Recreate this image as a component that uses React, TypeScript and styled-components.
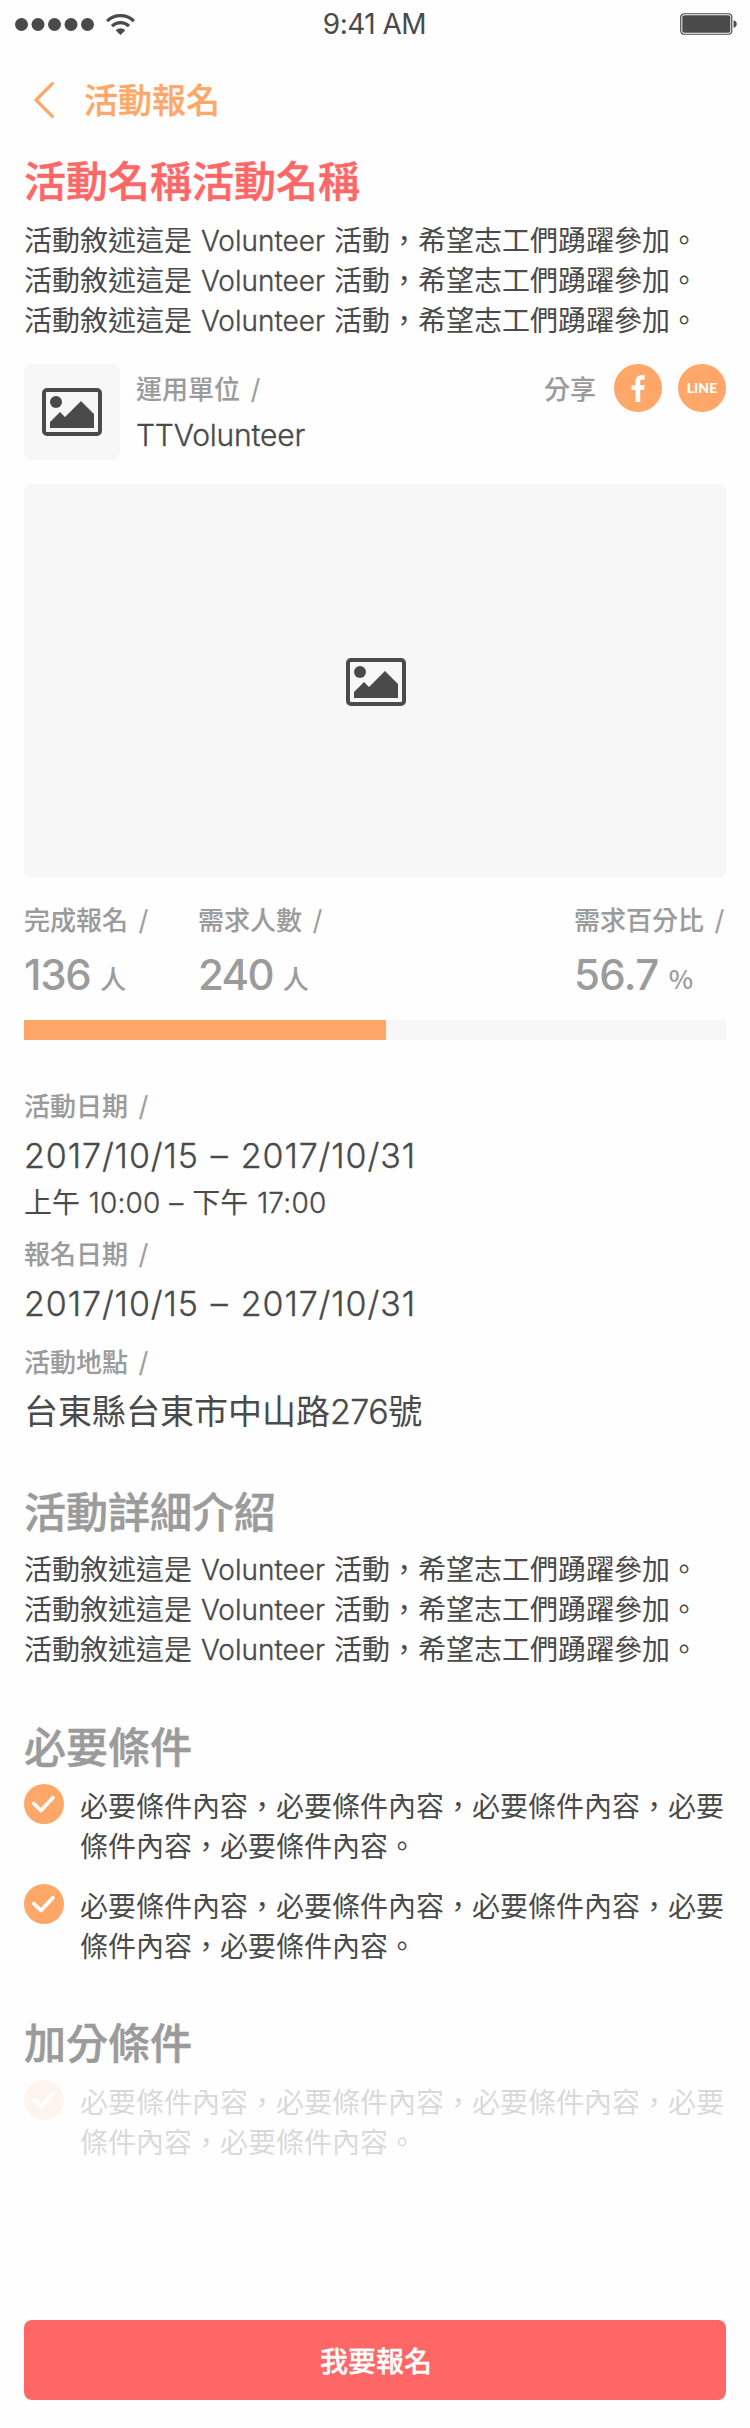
import React from 'react';
import styled, { createGlobalStyle } from 'styled-components';

const color = {
  coral: '#ff6666',
  orange: '#ffa768',
  ink: '#4a4a4a',
  grey: '#9b9b9b',
  panel: '#f7f7f7',
};

const GlobalStyle = createGlobalStyle`
  *, *::before, *::after { box-sizing: border-box; }
  body {
    margin: 0;
    background: #fefefe;
    color: ${color.ink};
    font-family: 'Noto Sans CJK TC', sans-serif;
  }
  :where(h1, h2, p, ul) { margin: 0; padding: 0; font-weight: inherit; }
  :where(svg) { display: block; flex: none; }
`;

const Screen = styled.div`
  width: 750px;
  height: 2428px;
  display: flex;
  flex-direction: column;
  padding: 0 24px 28px;
  background: #fefefe;
`;

const StatusBar = styled.header`
  height: 48px;
  margin: 0 -24px;
  padding: 0 13px 0 15px;
  display: grid;
  grid-template-columns: 1fr auto 1fr;
  align-items: center;
`;

const Signal = styled.div`
  display: flex;
  align-items: center;
  gap: 11px;
`;

const Clock = styled.time`
  padding-right: 3px;
  font: 400 28px/48px Inter, sans-serif;
  letter-spacing: -0.5px;
`;

const BatterySlot = styled.div`
  display: flex;
  justify-content: flex-end;
`;

const NavBar = styled.nav`
  height: 101px;
  padding-left: 10px;
  display: flex;
  align-items: center;
  gap: 30px;
  color: ${color.orange};
  font-size: 34px;
  font-weight: 500;
  line-height: 48px;
  -webkit-text-stroke: 0.3px currentColor;

  > svg { margin-top: 3px; }
`;

const Heading = styled.h2<{ $accent?: boolean; $top?: number }>`
  margin-top: ${(p) => p.$top ?? 0}px;
  font-size: 42px;
  font-weight: 500;
  line-height: 60px;
  color: ${(p) => (p.$accent ? color.coral : color.grey)};
  -webkit-text-stroke: 0.5px currentColor;
`;

const Copy = styled.p<{ $top?: number }>`
  margin-top: ${(p) => p.$top ?? 0}px;
  font-size: 28px;
  font-weight: 400;
  line-height: 40px;
  white-space: nowrap;
`;

const Latin = styled.span`
  display: inline-block;
  width: 142px;
  text-align: center;
  font-family: Inter, sans-serif;
  font-weight: 350;
  line-height: 28px;
  -webkit-text-stroke: 0.35px currentColor;
`;

const Num = styled.span`
  font-family: Inter, sans-serif;
  font-weight: 350;
  line-height: 0;
  letter-spacing: 0.9px;
  word-spacing: 1.5px;
  -webkit-text-stroke: 0.35px currentColor;
`;

const TimeNum = styled(Num)<{ $track?: number }>`
  letter-spacing: ${(p) => p.$track ?? 0.2}px;
  word-spacing: 0.7px;
`;

const Slash = styled(Num)`
  margin-left: 5px;
  font-size: 27px;
  letter-spacing: 0;
  -webkit-text-stroke: 0.5px currentColor;
`;

const Label = styled.span`
  display: block;
  font-size: 26px;
  font-weight: 500;
  line-height: 36px;
  color: ${color.grey};
  white-space: nowrap;
  -webkit-text-stroke: 0.1px currentColor;
`;

const OrgRow = styled.section`
  margin-top: 25px;
  height: 96px;
  display: flex;
`;

const Thumb = styled.div`
  width: 96px;
  height: 96px;
  border-radius: 8px;
  background: ${color.panel};
  display: grid;
  place-items: center;
`;

const OrgText = styled.div`
  flex: 1;
  padding: 6px 0 0 16px;
`;

const OrgName = styled.p`
  margin-top: 8px;
  font: 350 30px/42px Inter, sans-serif;
  letter-spacing: -0.2px;
  -webkit-text-stroke: 0.35px currentColor;
`;

const Share = styled.div`
  height: 48px;
  display: flex;
  align-items: center;
  gap: 16px;

  ${Label} { margin: 0 2px 1px 0; }
`;

const RoundButton = styled.button`
  width: 48px;
  height: 48px;
  padding: 0;
  border: 0;
  border-radius: 50%;
  background: ${color.orange};
  color: #fff;
  display: grid;
  place-items: center;
  font: 900 14px/1 Lato, sans-serif;
`;

const Hero = styled.div`
  margin-top: 24px;
  padding: 2px 0 0 2px;
  height: 394px;
  border-radius: 8px;
  background: ${color.panel};
  display: grid;
  place-items: center;
`;

const Stats = styled.section`
  margin-top: 23px;
  height: 119px;
  display: flex;
`;

const Stat = styled.div<{ $width: number; $last?: boolean }>`
  width: ${(p) => p.$width}px;
  margin-left: ${(p) => (p.$last ? 'auto' : 0)};
`;

const Figure = styled.p`
  display: flex;
  align-items: flex-start;
  gap: 10px;
  margin-top: 8px;
  color: ${color.grey};
  line-height: 60px;
`;

const Value = styled.span<{ $track?: number }>`
  font-family: Inter, sans-serif;
  font-size: 42px;
  font-weight: 500;
  letter-spacing: ${(p) => p.$track ?? -1.3}px;
`;

const Unit = styled.span`
  padding-top: 3px;
  font-size: 26px;
  font-weight: 500;
`;

const Track = styled.div`
  height: 20px;
  flex: none;
  background: ${color.panel};
`;

const Fill = styled.div`
  height: 100%;
  background: ${color.orange};
`;

const Facts = styled.section`
  margin-top: 47px;
`;

const Fact = styled.div<{ $top?: number }>`
  margin-top: ${(p) => p.$top ?? 0}px;
`;

const FactValue = styled.p<{ $top?: number }>`
  margin-top: ${(p) => p.$top ?? 7}px;
  font-size: 34px;
  font-weight: 400;
  line-height: 48px;
  white-space: nowrap;
`;

const Checklist = styled.ul`
  margin-top: 9px;
  list-style: none;
  display: flex;
  flex-direction: column;
  gap: 20px;
`;

const CheckItem = styled.li<{ $faded?: boolean }>`
  display: flex;
  align-items: flex-start;
  gap: 16px;
  height: 80px;

  > svg { opacity: ${(p) => (p.$faded ? 0.1 : 1)}; }
  > p { opacity: ${(p) => (p.$faded ? 0.2 : 1)}; }
`;

const Submit = styled.button`
  margin-top: auto;
  height: 80px;
  border: 0;
  border-radius: 8px;
  padding: 0 0 0 2px;
  background: ${color.coral};
  color: #fff;
  font: 500 28px/40px 'Noto Sans CJK TC', sans-serif;
  -webkit-text-stroke: 0.3px currentColor;
`;

const SignalDots = () => (
  <svg width="80" height="14" viewBox="0 0 80 14" fill={color.ink}>
    {[6.5, 23, 39.5, 56, 72.5].map((x) => (
      <circle key={x} cx={x} cy="7.5" r="6.5" />
    ))}
  </svg>
);

const Wifi = () => (
  <svg width="29" height="21" viewBox="0 0 29 21">
    <g fill="none" stroke={color.ink} strokeWidth="3.2">
      <path d="M1.1 7.2a19 19 0 0 1 26.8 0" />
      <path d="M6 12.1a12 12 0 0 1 17 0" />
    </g>
    <path d="M9.6 16.2a7 7 0 0 1 9.8 0L14.5 21z" fill={color.ink} />
  </svg>
);

const Battery = () => (
  <svg width="57" height="22" viewBox="0 0 57 22">
    <rect x="0.75" y="0.75" width="51" height="20.5" rx="3.5" fill="none" stroke={color.ink} strokeWidth="1.2" />
    <rect x="2.3" y="2.3" width="48" height="17.4" rx="2" fill={color.ink} />
    <path d="M53.6 7.3c4.2 1 4.2 6.6 0 7.6z" fill={color.ink} />
  </svg>
);

const BackArrow = () => (
  <svg width="20" height="36" viewBox="0 0 20 36">
    <path d="M18.4 1.7L2 18l16.4 16.3" fill="none" stroke={color.orange} strokeWidth="3.2" strokeLinecap="round" strokeLinejoin="round" />
  </svg>
);

const Picture = () => (
  <svg width="60" height="48" viewBox="0 0 60 48" fill={color.ink}>
    <rect x="2" y="2" width="56" height="44" rx="3" fill="none" stroke={color.ink} strokeWidth="4" />
    <circle cx="14" cy="14" r="6" />
    <path d="M8 40v-6l10-10 5 5 16-16 13 13v14z" />
  </svg>
);

const FacebookMark = () => (
  <svg width="14" height="27" viewBox="0 0 14 27" fill="#fff">
    <path d="M4.5 27V15.1H0.5V10.3h4V6.5C4.5 2.5 6.8.2 10.5.2h3.2v4.3h-2.2c-1.7 0-2.3.8-2.3 2.3v3.5h4.4l-.5 4.8H9.2V27z" />
  </svg>
);

const Check = () => (
  <svg width="40" height="40" viewBox="0 0 40 40">
    <circle cx="20" cy="20" r="20" fill={color.orange} />
    <path d="M9.8 19.5l7.2 7 11.8-12.7" fill="none" stroke="#fff" strokeWidth="3.8" strokeLinecap="round" strokeLinejoin="round" />
  </svg>
);

const Description = ({ top }: { top: number }) => (
  <Copy $top={top}>
    {[0, 1, 2].map((line) => (
      <React.Fragment key={line}>
        活動敘述這是<Latin>Volunteer</Latin>活動，希望志工們踴躍參加。
        <br />
      </React.Fragment>
    ))}
  </Copy>
);

const Requirement = ({ faded }: { faded?: boolean }) => (
  <CheckItem $faded={faded}>
    <Check />
    <Copy $top={1}>
      必要條件內容，必要條件內容，必要條件內容，必要
      <br />
      條件內容，必要條件內容。
    </Copy>
  </CheckItem>
);

export default function App() {
  return (
    <Screen lang="zh-TW">
      <GlobalStyle />
      <StatusBar>
        <Signal>
          <SignalDots />
          <Wifi />
        </Signal>
        <Clock>9:41 AM</Clock>
        <BatterySlot>
          <Battery />
        </BatterySlot>
      </StatusBar>

      <NavBar>
        <BackArrow />
        <span>活動報名</span>
      </NavBar>

      <Heading as="h1" $accent>活動名稱活動名稱</Heading>
      <Description top={10} />

      <OrgRow>
        <Thumb>
          <Picture />
        </Thumb>
        <OrgText>
          <Label>運用單位 <Slash>/</Slash></Label>
          <OrgName>TTVolunteer</OrgName>
        </OrgText>
        <Share>
          <Label>分享</Label>
          <RoundButton aria-label="Facebook">
            <FacebookMark />
          </RoundButton>
          <RoundButton>LINE</RoundButton>
        </Share>
      </OrgRow>

      <Hero>
        <Picture />
      </Hero>

      <Stats>
        <Stat $width={174}>
          <Label>完成報名 <Slash>/</Slash></Label>
          <Figure><Value>136</Value><Unit>人</Unit></Figure>
        </Stat>
        <Stat $width={174}>
          <Label>需求人數 <Slash>/</Slash></Label>
          <Figure><Value $track={-1.7}>240</Value><Unit>人</Unit></Figure>
        </Stat>
        <Stat $width={152} $last>
          <Label>需求百分比 <Slash>/</Slash></Label>
          <Figure><Value $track={-0.6}>56.7</Value><Unit>%</Unit></Figure>
        </Stat>
      </Stats>
      <Track>
        <Fill style={{ width: `${(362 / 702) * 100}%` }} />
      </Track>

      <Facts>
        <Fact>
          <Label>活動日期 <Slash>/</Slash></Label>
          <FactValue><Num>2017/10/15 – 2017/10/31</Num></FactValue>
          <Copy $top={3}>上午<TimeNum> 10:00 – </TimeNum>下午<TimeNum> 17:00</TimeNum></Copy>
        </Fact>
        <Fact $top={14}>
          <Label>報名日期 <Slash>/</Slash></Label>
          <FactValue><Num>2017/10/15 – 2017/10/31</Num></FactValue>
        </Fact>
        <Fact $top={17}>
          <Label>活動地點 <Slash>/</Slash></Label>
          <FactValue>台東縣台東市中山路<TimeNum $track={-0.5}>276</TimeNum>號</FactValue>
        </Fact>
      </Facts>

      <Heading $top={46}>活動詳細介紹</Heading>
      <Description top={8} />

      <Heading $top={47}>必要條件</Heading>
      <Checklist>
        <Requirement />
        <Requirement />
      </Checklist>

      <Heading $top={47}>加分條件</Heading>
      <Checklist>
        <Requirement faded />
      </Checklist>

      <Submit>我要報名</Submit>
    </Screen>
  );
}
